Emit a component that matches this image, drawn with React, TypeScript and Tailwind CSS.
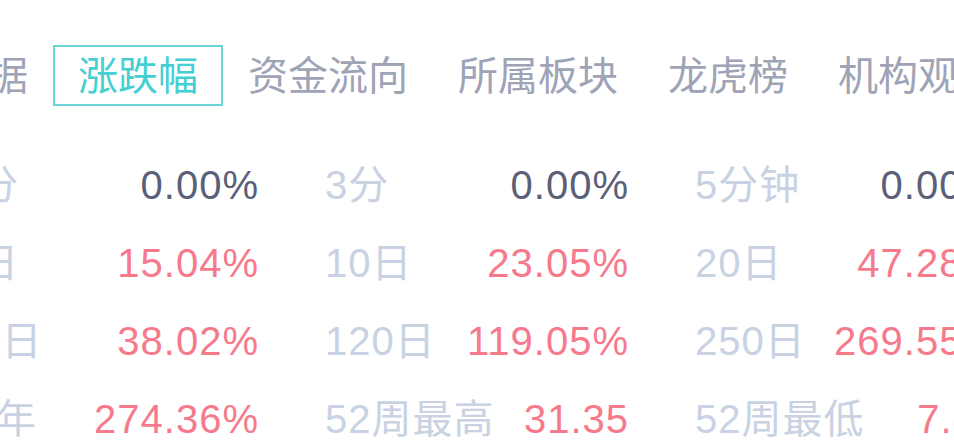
import React from "react";

const tabs = ["数据", "涨跌幅", "资金流向", "所属板块", "龙虎榜", "机构观点"];

type Cell = { label: string; value: string; up?: boolean };

// rows of the change-rate table, three cells each
const rows: Cell[][] = [
  [
    { label: "1分", value: "0.00%" },
    { label: "3分", value: "0.00%" },
    { label: "5分钟", value: "0.00%" },
  ],
  [
    { label: "5日", value: "15.04%", up: true },
    { label: "10日", value: "23.05%", up: true },
    { label: "20日", value: "47.28%", up: true },
  ],
  [
    { label: "60日", value: "38.02%", up: true },
    { label: "120日", value: "119.05%", up: true },
    { label: "250日", value: "269.55%", up: true },
  ],
  [
    { label: "今年", value: "274.36%", up: true },
    { label: "52周最高", value: "31.35", up: true },
    { label: "52周最低", value: "7.80", up: true },
  ],
];

const App = () => {
  return (
    <div
      className="w-[954px] h-[447px] overflow-hidden bg-white text-[40px] leading-none"
      style={{ fontFamily: '"Liberation Sans", "Noto Sans CJK SC", sans-serif' }}
    >
      <div className="flex mt-[45px] ml-[-77px] whitespace-nowrap">
        {tabs.map((t) => {
          const active = t === "涨跌幅";
          return (
            <div
              key={t}
              className={
                active
                  ? "shrink-0 h-[61px] px-[23px] border-2 border-[#6dd4d8] text-[#45cfd2] flex items-center"
                  : "shrink-0 h-[61px] px-[23px] border-2 border-transparent text-[#9ea3b6] flex items-center"
              }
            >
              {t}
            </div>
          );
        })}
      </div>

      <div className="mt-[40px] ml-[-45px] tracking-[1px]">
        {rows.map((row, i) => (
          <div key={i} className="flex gap-x-[67px] h-[78px] items-center">
            {row.map((c) => (
              <div key={c.label} className="shrink-0 w-[303px] flex justify-between items-center whitespace-nowrap">
                <span className="text-[#c8d2e3]">{c.label}</span>
                <span className={c.up ? "text-[#f77a8c] mr-[-1px]" : "text-[#5a6079] mr-[-1px]"}>{c.value}</span>
              </div>
            ))}
          </div>
        ))}
      </div>
    </div>
  );
};

export default App;
